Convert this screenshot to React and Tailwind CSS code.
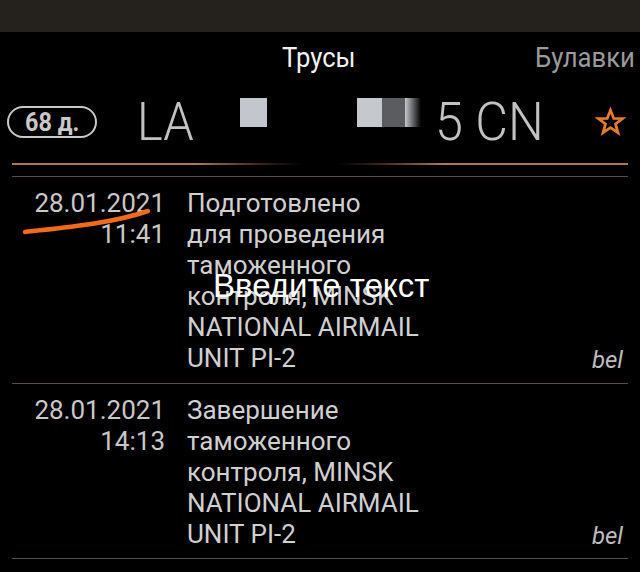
export default function App() {
  const entries = [
    {
      date: "28.01.2021",
      time: "11:41",
      lines: ["Подготовлено", "для проведения", "таможенного", "контроля, MINSK", "NATIONAL AIRMAIL", "UNIT PI-2"],
      pb: "pb-[9px]",
    },
    {
      date: "28.01.2021",
      time: "14:13",
      lines: ["Завершение", "таможенного", "контроля, MINSK", "NATIONAL AIRMAIL", "UNIT PI-2"],
      pb: "pb-[8px]",
    },
  ];

  return (
    <div className="relative w-[640px] h-[572px] bg-black overflow-hidden font-['Roboto',sans-serif]">
      <div className="h-[32px] bg-[#25221d]" />

      {/* tabs */}
      <div className="flex items-center h-[52px] text-[27px] whitespace-nowrap">
        <span className="ml-[282px] inline-block origin-left scale-x-[0.95] text-[#f2f2f2]">Трусы</span>
        <span className="ml-[176px] inline-block origin-left scale-x-[0.95] text-[#9b9b9b]">Булавки</span>
      </div>

      {/* header */}
      <div className="flex items-center h-[76px] whitespace-nowrap">
        <div className="ml-[7px] w-[90px] h-[32px] border-2 border-[#c8c8c8] rounded-full flex items-center justify-center text-[26px] font-bold text-[#c8c8c8] leading-none">
          <span className="inline-block scale-x-[0.9]">68 д.</span>
        </div>
        <div className="ml-[40px] w-[103px] text-[53px] font-light text-[#c2c2c2] leading-none">
          <span className="inline-block origin-left scale-x-[0.92]">LA</span>
        </div>
        <div className="w-[27px] h-[29px] mb-[20px] bg-[#c3c6cc]" />
        <div className="ml-[90px] flex mb-[20px]">
          <div className="w-[25px] h-[29px] bg-[#c5c8cd]" />
          <div className="w-[23px] h-[29px] bg-[#5a5c5f]" />
          <div className="w-[16px] h-[29px] bg-gradient-to-r from-[#c5c8cd] to-transparent" />
        </div>
        <div className="ml-[14px] text-[53px] font-light text-[#c2c2c2] leading-none">
          <span className="inline-block origin-left scale-x-[0.95]">5 CN</span>
        </div>
        <svg className="ml-auto mr-[14px]" width="31" height="30" viewBox="0 0 24 24">
          <polygon
            points="12,2.5 14.6,9.2 21.6,9.3 16,13.6 18,20.6 12,16.5 6,20.6 8,13.6 2.4,9.3 9.4,9.2"
            fill="none"
            stroke="#e57b2c"
            strokeWidth="2.2"
          />
        </svg>
      </div>

      <div className="mt-[3px] mx-[12px] h-[2px] bg-gradient-to-r from-[#a97a52] from-30% via-black via-50% to-[#a97a52] to-70%" />
      <div className="mt-[11px] mx-[12px] h-px bg-[#5a4f4b]" />

      {entries.map((e, i) => (
        <div key={i}>
          <div className={`flex pt-[11px] ${e.pb} text-[26px] leading-[31px]`}>
            <div className="w-[165px] text-right text-[#c8c8c8]">
              <div>{e.date}</div>
              <div>{e.time}</div>
            </div>
            <div className="ml-[22px] flex-1 text-[#d0d0d0] whitespace-nowrap">
              {e.lines.map((l, j) => (
                <div key={j}>{l}</div>
              ))}
            </div>
            <div className="self-end mr-[17px] mb-[-2px] italic text-[24px] text-[#bdbdbd]">bel</div>
          </div>
          <div className="mx-[12px] h-px bg-[#5a4f4b]" />
        </div>
      ))}

      {/* annotations drawn over the screenshot */}
      <svg className="absolute left-0 top-0" width="640" height="572">
        <path d="M25 232 C 60 228, 110 224, 148 211" fill="none" stroke="#f26a1b" strokeWidth="4.5" strokeLinecap="round" />
      </svg>
      <div className="absolute left-[213px] top-[266px] text-[33px] leading-[40px] text-white font-['Liberation_Sans',sans-serif] whitespace-nowrap">
        Введите текст
      </div>
    </div>
  );
}
